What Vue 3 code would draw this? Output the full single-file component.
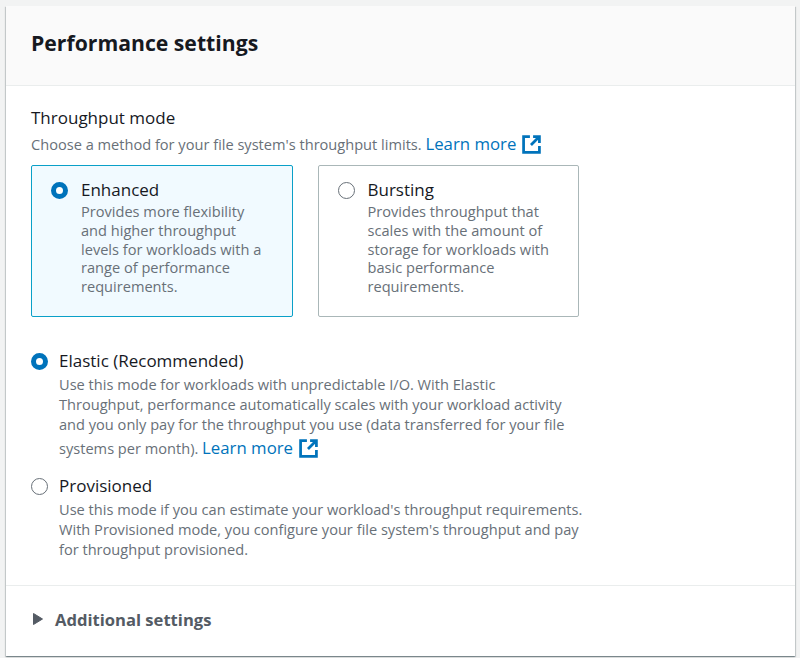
<template>
  <div class="page">
    <section class="panel">
      <header class="panel-head">
        <h2>Performance settings</h2>
      </header>

      <div class="panel-body">
        <div class="field-label">Throughput mode</div>
        <p class="field-desc">
          Choose a method for your file system's throughput limits.
          <a class="ext-link">Learn more<svg class="ext-icon" viewBox="0 0 18 18"><path d="M7.5 1.5H1.5v15h15v-6M10.5 1.5h6v6M16.5 1.5L8.5 9.5" /></svg></a>
        </p>

        <div class="tiles">
          <div v-for="tile in tiles" :key="tile.title" class="tile" :class="{ active: tile.checked }">
            <span class="radio" :class="{ on: tile.checked }"></span>
            <div>
              <div class="opt-title">{{ tile.title }}</div>
              <div class="opt-desc tile-desc">{{ tile.desc }}</div>
            </div>
          </div>
        </div>

        <div class="radios">
          <div class="radio-row elastic">
            <span class="radio on"></span>
            <div>
              <div class="opt-title">Elastic (Recommended)</div>
              <div class="opt-desc">
                Use this mode for workloads with unpredictable I/O. With Elastic Throughput, performance automatically scales with your workload activity and you only pay for the throughput you use (data transferred for your file systems per month).
                <a class="ext-link">Learn more<svg class="ext-icon" viewBox="0 0 18 18"><path d="M7.5 1.5H1.5v15h15v-6M10.5 1.5h6v6M16.5 1.5L8.5 9.5" /></svg></a>
              </div>
            </div>
          </div>
          <div class="radio-row">
            <span class="radio"></span>
            <div>
              <div class="opt-title">Provisioned</div>
              <div class="opt-desc">Use this mode if you can estimate your workload's throughput requirements. With Provisioned mode, you configure your file system's throughput and pay for throughput provisioned.</div>
            </div>
          </div>
        </div>
      </div>

      <footer class="panel-foot">
        <svg class="caret" viewBox="0 0 12 14"><path d="M1.5 1.5L10.5 7L1.5 12.5Z" /></svg>
        <span>Additional settings</span>
      </footer>
    </section>
  </div>
</template>

<script setup>
const tiles = [
  {
    title: 'Enhanced',
    desc: 'Provides more flexibility and higher throughput levels for workloads with a range of performance requirements.',
    checked: true
  },
  {
    title: 'Bursting',
    desc: 'Provides throughput that scales with the amount of storage for workloads with basic performance requirements.',
    checked: false
  }
]
</script>

<style>
body { background: #f2f3f3; }
</style>

<style scoped>
.page { height: 658px; box-sizing: border-box; padding: 6px 5px 0 6px; overflow: hidden; font-family: "Open Sans", "Noto Sans", sans-serif; color: #16191f; }
.panel { height: 650px; background: #fff; box-shadow: 0 1px 1px 0 rgba(0, 28, 36, 0.3), 1px 1px 1px 0 rgba(0, 28, 36, 0.15), -1px 1px 1px 0 rgba(0, 28, 36, 0.15); display: flex; flex-direction: column; }
.panel-head { height: 80px; box-sizing: border-box; background: #fafafa; border-bottom: 1px solid #eaeded; padding: 0 25px 6px; display: flex; align-items: center; }
.panel-head h2 { margin: 0; font-size: 21.2px; line-height: 26px; font-weight: 700; }
.panel-body { flex: 1; padding: 20px 25px 0; }
.field-label { font-size: 17px; line-height: 24px; }
.field-desc { margin: 0; padding-top: 3px; font-size: 14.6px; line-height: 22px; color: #687078; }
.ext-link { color: #0073bb; font-size: 16.8px; }
.ext-icon { width: 19px; height: 19px; margin-left: 6px; vertical-align: -4px; fill: none; stroke: #0073bb; stroke-width: 2.6; }
.tiles { display: flex; gap: 25px; margin-top: 10px; width: 548px; }
.tile { flex: 1; height: 152px; box-sizing: border-box; border: 1px solid #aab7b8; border-radius: 2px; padding: 12px 17px 0 19px; display: flex; gap: 13px; }
.tile.active { border-color: #0aa0c8; background: #f1faff; }
.radio { flex: none; width: 17px; height: 17px; box-sizing: border-box; margin-top: 4px; border: 1.5px solid #687078; border-radius: 50%; background: #fff; }
.radio.on { border: 5px solid #0073bb; }
.opt-title { font-size: 17px; line-height: 24px; }
.opt-desc { font-size: 14.6px; line-height: 20px; color: #687078; }
.opt-desc .ext-link { line-height: 28px; }
.tile-desc { line-height: 18.75px; max-width: 188px; }
.radios { margin-top: 32px; width: 554px; display: flex; flex-direction: column; gap: 12px; }
.radio-row { display: flex; gap: 11px; }
.radio-row .opt-desc { margin-top: 1px; }
.radio-row.elastic { width: 549px; }
.panel-foot { height: 71px; box-sizing: border-box; border-top: 1px solid #eaeded; padding: 0 26px 4px; display: flex; align-items: center; gap: 11px; font-size: 16.6px; font-weight: 700; color: #545b64; }
.caret { width: 12px; height: 14px; fill: #545b64; stroke: #545b64; stroke-linejoin: round; }
</style>
